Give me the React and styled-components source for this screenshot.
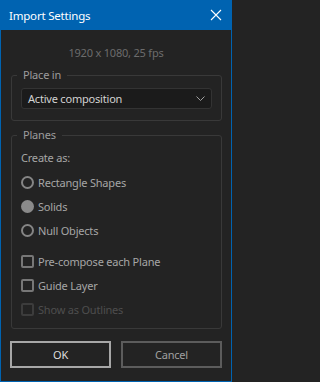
import React from "react";
import styled, { createGlobalStyle } from "styled-components";

const GlobalStyle = createGlobalStyle`
  html, body {
    margin: 0;
    padding: 0;
    background: #232323;
  }
  body {
    font-family: "Noto Sans", "Open Sans", sans-serif;
    letter-spacing: -0.2px;
  }
`;

const Window = styled.div`
  box-sizing: border-box;
  width: 232px;
  height: 382px;
  border: 1px solid #0063b1;
  border-top: none;
  background: #232323;
  display: flex;
  flex-direction: column;
`;

const TitleBar = styled.div`
  height: 30px;
  margin: 0 -1px;
  background: #0063b1;
  display: flex;
  align-items: center;
  justify-content: space-between;
  padding: 0 9px 0 9px;
  color: #ffffff;
  font-size: 11.5px;
`;

const CloseButton = styled.svg`
  width: 12px;
  height: 12px;
  margin-right: 1px;
`;

const Body = styled.div`
  flex: 1;
  display: flex;
  flex-direction: column;
  padding: 0 9px 0 9px;
`;

const Info = styled.div`
  text-align: center;
  color: #6c6c6c;
  font-size: 11px;
  margin-top: 15px;
  height: 16px;
  line-height: 16px;
`;

const Group = styled.fieldset`
  margin: ${(p) => p.$top}px 0 0 1px;
  padding: ${(p) => p.$pad};
  border: 1px solid #393939;
  border-radius: 3px;
  min-width: 0;
  height: ${(p) => p.$height}px;
  box-sizing: border-box;
  display: flex;
  flex-direction: column;
`;

const Legend = styled.legend`
  color: #9c9c9c;
  font-size: 11px;
  padding: 0 6px;
  margin-left: -4px;
  line-height: 14px;
`;

const Select = styled.div`
  height: 21px;
  box-sizing: border-box;
  border: 1px solid #333333;
  border-radius: 3px;
  background: #1b1b1b;
  color: #d2d2d2;
  font-size: 11px;
  display: flex;
  align-items: center;
  justify-content: space-between;
  padding: 0 6px 0 6px;
`;

const Label = styled.div`
  color: #a6a6a6;
  font-size: 11px;
  height: 24px;
  line-height: 24px;
`;

const Option = styled.div`
  display: flex;
  align-items: center;
  gap: 4px;
  height: 24px;
  color: ${(p) => (p.$disabled ? "#4e4e4e" : "#a6a6a6")};
  font-size: 11px;
`;

const Radio = styled.span`
  box-sizing: border-box;
  width: 13px;
  height: 13px;
  border-radius: 50%;
  border: ${(p) => (p.$checked ? "none" : "2px solid #858585")};
  background: ${(p) => (p.$checked ? "#8a8a8a" : "transparent")};
`;

const Check = styled.span`
  box-sizing: border-box;
  width: 13px;
  height: 13px;
  border-radius: 2px;
  border: 2px solid ${(p) => (p.$disabled ? "#3c3c3c" : "#777777")};
`;

const Spacer = styled.div`
  height: ${(p) => p.$h}px;
`;

const Buttons = styled.div`
  display: grid;
  grid-template-columns: 1fr 1fr;
  gap: 10px;
  margin-top: 12px;
`;

const Button = styled.div`
  height: 27px;
  box-sizing: border-box;
  border: 2px solid ${(p) => (p.$primary ? "#a7a7a7" : "#5c5c5c")};
  color: ${(p) => (p.$primary ? "#dedede" : "#a0a0a0")};
  font-size: 11px;
  display: flex;
  align-items: center;
  justify-content: center;
`;

const Chevron = () => (
  <svg width="9" height="5" viewBox="0 0 9 5">
    <path d="M0.5 0.5 L4.5 4.5 L8.5 0.5" fill="none" stroke="#a0a0a0" strokeWidth="1" />
  </svg>
);

export default function App() {
  return (
    <>
      <GlobalStyle />
      <Window>
        <TitleBar>
          <span>Import Settings</span>
          <CloseButton viewBox="0 0 12 12">
            <path d="M1 1 L11 11 M11 1 L1 11" stroke="#ffffff" strokeWidth="1.1" />
          </CloseButton>
        </TitleBar>
        <Body>
          <Info>1920 x 1080, 25 fps</Info>
          <Group $top={7} $height={53} $pad="6px 9px 0 9px">
            <Legend>Place in</Legend>
            <Select>
              <span>Active composition</span>
              <Chevron />
            </Select>
          </Group>
          <Group $top={7} $height={201} $pad="4px 9px 0 9px">
            <Legend>Planes</Legend>
            <Label>Create as:</Label>
            <Option>
              <Radio />
              Rectangle Shapes
            </Option>
            <Option>
              <Radio $checked />
              Solids
            </Option>
            <Option>
              <Radio />
              Null Objects
            </Option>
            <Spacer $h={7} />
            <Option>
              <Check />
              Pre-compose each Plane
            </Option>
            <Option>
              <Check />
              Guide Layer
            </Option>
            <Option $disabled>
              <Check $disabled />
              Show as Outlines
            </Option>
          </Group>
          <Buttons>
            <Button $primary>OK</Button>
            <Button>Cancel</Button>
          </Buttons>
        </Body>
      </Window>
    </>
  );
}
